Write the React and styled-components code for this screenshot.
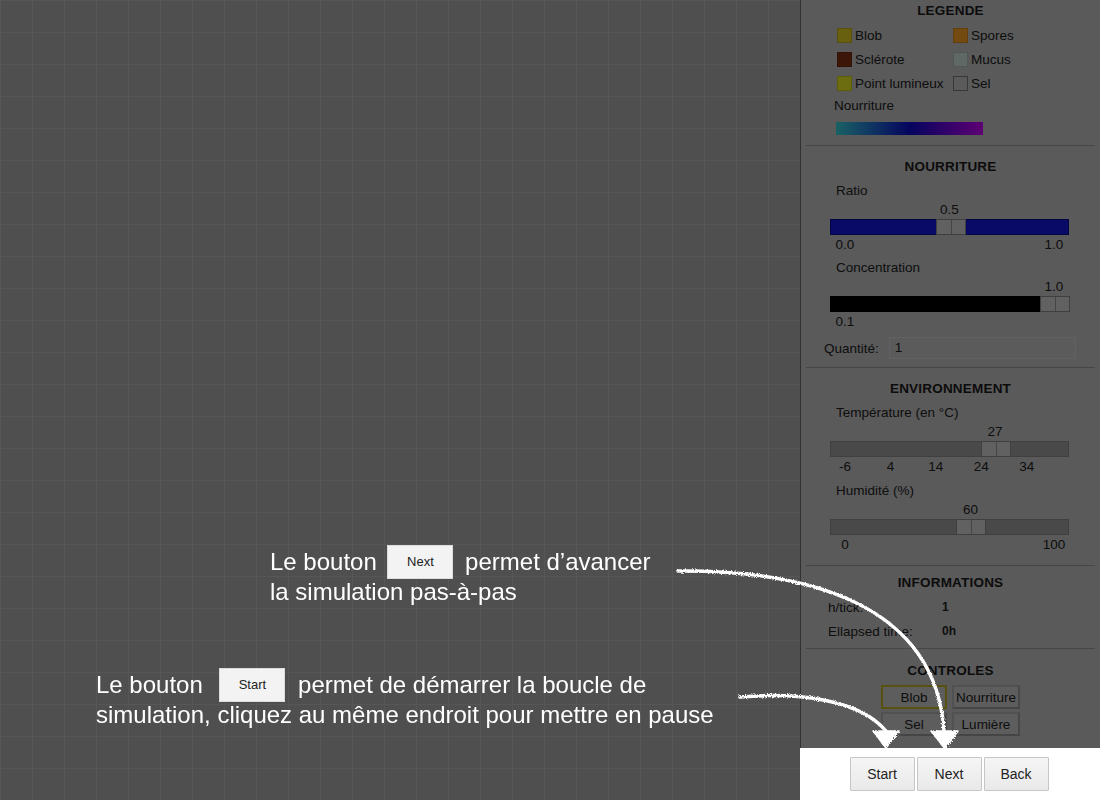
import React from "react"
import styled, { createGlobalStyle } from 'styled-components'

const GlobalStyle = createGlobalStyle`
  html, body {
    margin: 0;
    padding: 0;
    height: 100%;
    overflow: hidden;
  }
  body {
    font-family: "Liberation Sans", Arial, Helvetica, sans-serif;
    color: #222;
  }
  #root {
    height: 100%;
  }
`;

const Page = styled.div`
  display: flex;
  height: 100vh;
  width: 100vw;
`;

const Canvas = styled.div`
  flex: 1;
  background-color: #b0b0b0;
  background-image:
    linear-gradient(to right, #bebebe 1px, transparent 1px),
    linear-gradient(to bottom, #bebebe 1px, transparent 1px);
  background-size: 32px 32px;
`;

const Sidebar = styled.div`
  width: 300px;
  display: flex;
  flex-direction: column;
`;

const Panel = styled.div`
  flex: 1;
  background: #c7c7c7;
  border-left: 1px solid #6e6e6e;
  display: flex;
  flex-direction: column;
`;

const Section = styled.div`
  margin: 0 5px;
  padding: ${p => p.$pad};
  border-bottom: ${p => (p.$last ? 'none' : '1px solid #9c9c9c')};
  flex: ${p => (p.$last ? 1 : 'none')};
`;

const Title = styled.div`
  font-size: 13.5px;
  font-weight: bold;
  line-height: ${p => p.$lh || 20}px;
  text-align: center;
  letter-spacing: 0.2px;
  color: #1c1c1c;
`;

const LegendGrid = styled.div`
  display: grid;
  grid-template-columns: 116px 116px;
  grid-auto-rows: 24px;
  padding-left: 31px;
  margin-top: 4px;
`;

const LegendItem = styled.div`
  display: flex;
  align-items: center;
  gap: 3px;
  font-size: 13.5px;
`;

const Swatch = styled.span`
  width: 15px;
  height: 15px;
  box-sizing: border-box;
  background: ${p => p.$color};
  border: 1px solid ${p => (p.$outline ? '#7a7a7a' : 'rgba(0,0,0,0.15)')};
`;

const Label = styled.div`
  font-size: 13.5px;
  line-height: ${p => p.$lh || 20}px;
  padding-left: ${p => p.$indent || 30}px;
`;

const GradientBar = styled.div`
  margin: 5px 0 0 30px;
  width: 147px;
  height: 13px;
  background: linear-gradient(to right, #3ad8e0, #0c0cd0 50%, #d000ff);
`;

const SliderBlock = styled.div`
  margin-top: ${p => p.$top || 0}px;
`;

const ValueRow = styled.div`
  position: relative;
  margin-left: 24px;
  width: 239px;
  height: ${p => p.$h}px;
  font-size: 13.5px;
  line-height: ${p => p.$h}px;
`;

const Mark = styled.span`
  position: absolute;
  top: 0;
  transform: translateX(-50%);
  white-space: nowrap;
`;

const Track = styled.div`
  position: relative;
  margin-left: 24px;
  width: 239px;
  height: 16px;
  box-sizing: border-box;
  background: ${p => p.$color};
  border: 1px solid ${p => p.$edge || 'rgba(0,0,0,0.35)'};
`;

const Thumb = styled.div`
  position: absolute;
  top: -1px;
  width: 30px;
  height: 16px;
  box-sizing: border-box;
  background: #d8d8d8;
  border: 1px solid #8c8c8c;
  transform: translateX(-50%);
  &::after {
    content: "";
    position: absolute;
    left: 14px;
    top: 0;
    bottom: 0;
    width: 1px;
    background: #9a9a9a;
  }
`;

const QuantRow = styled.div`
  display: flex;
  align-items: center;
  gap: 10px;
  margin-top: 5px;
  padding-left: 18px;
  font-size: 13.5px;
`;

const QuantInput = styled.div`
  width: 187px;
  height: 22px;
  box-sizing: border-box;
  border: 1px solid #dadada;
  background: #cbcbcb;
  padding-left: 5px;
  line-height: 20px;
`;

const InfoRow = styled.div`
  display: flex;
  align-items: center;
  height: 24px;
  padding-left: 22px;
  font-size: 13.5px;
`;

const InfoKey = styled.span`
  width: 114px;
`;

const InfoValue = styled.span`
  font-size: 12px;
  font-weight: bold;
`;

const ControlGrid = styled.div`
  display: grid;
  grid-template-columns: 66px 68px;
  grid-auto-rows: 24px;
  gap: 3px 5px;
  justify-content: center;
  margin-top: 4px;
`;

const ControlButton = styled.button`
  font-family: inherit;
  font-size: 13.5px;
  color: #222;
  padding: 0;
  background: #cecece;
  border: ${p => (p.$active ? '2px solid #c3b526' : '2px solid #b4b4b4')};
  border-bottom-color: ${p => (p.$active ? '#c3b526' : '#9a9a9a')};
  border-right-color: ${p => (p.$active ? '#c3b526' : '#a0a0a0')};
`;

const BottomBar = styled.div`
  position: relative;
  z-index: 20;
  height: 52px;
  box-sizing: border-box;
  background: #fff;
  display: flex;
  justify-content: center;
  align-items: flex-start;
  padding-top: 9px;
  padding-right: 2px;
  gap: 2px;
`;

const BarButton = styled.button`
  width: 65px;
  height: 34px;
  font-family: inherit;
  font-size: 14px;
  color: #222;
  background: linear-gradient(to bottom, #f5f5f5, #e9e9e9);
  border: 1px solid #c6c6c6;
  border-radius: 1px;
  padding: 0;
`;

const Overlay = styled.div`
  position: fixed;
  inset: 0;
  z-index: 10;
  background: rgba(0, 0, 0, 0.55);
  pointer-events: none;
`;

const Arrows = styled.svg`
  position: absolute;
  left: 0;
  top: 0;
`;

const Hint = styled.div`
  position: absolute;
  left: ${p => p.$x}px;
  top: ${p => p.$y}px;
  color: #fff;
  font-size: 24px;
  line-height: 30px;
  white-space: nowrap;
`;

const HintButton = styled.span`
  display: inline-flex;
  align-items: center;
  justify-content: center;
  width: 66px;
  height: 34px;
  margin: -4px ${p => p.$right}px -4px ${p => p.$left}px;
  vertical-align: middle;
  box-sizing: border-box;
  background: #f3f3f3;
  border: 1px solid #dcdcdc;
  color: #222;
  font-size: 13px;
  position: relative;
  top: -2px;
`;

const legend = [
  { name: 'Blob', color: '#e6d222' },
  { name: 'Spores', color: '#ffa524' },
  { name: 'Sclérote', color: '#853214' },
  { name: 'Mucus', color: '#d2e6e1' },
  { name: 'Point lumineux', color: '#f0f024' },
  { name: 'Sel', color: 'transparent', outline: true },
];

// thumb centre runs from 15px to 224px inside a 239px track
const pos = (v, min, max) => 15 + ((v - min) / (max - min)) * 209;

const Slider = ({ label, value, min, max, ticks, color, edge, top }) => (
  <SliderBlock $top={top}>
    <Label>{label}</Label>
    <ValueRow $h={18}>
      <Mark style={{ left: pos(value, min, max) }}>{value}</Mark>
    </ValueRow>
    <Track $color={color} $edge={edge}>
      <Thumb style={{ left: pos(value, min, max) }} />
    </Track>
    <ValueRow $h={20}>
      {ticks.map(t => (
        <Mark key={t} style={{ left: pos(parseFloat(t), min, max) }}>{t}</Mark>
      ))}
    </ValueRow>
  </SliderBlock>
);

const App = () => {
  return (
    <Page>
      <GlobalStyle />
      <Canvas />
      <Sidebar>
        <Panel>
          <Section $pad="3px 0 10px">
            <Title $lh={16}>LEGENDE</Title>
            <LegendGrid>
              {legend.map(l => (
                <LegendItem key={l.name}>
                  <Swatch $color={l.color} $outline={l.outline} />
                  {l.name}
                </LegendItem>
              ))}
            </LegendGrid>
            <Label $indent={28} $lh={22}>Nourriture</Label>
            <GradientBar />
          </Section>

          <Section $pad="11px 0 8px">
            <Title>NOURRITURE</Title>
            <Slider label="Ratio" value="0.5" min={0} max={1} ticks={['0.0', '1.0']} color="#1414e6" top={4} />
            <Slider label="Concentration" value="1.0" min={0.1} max={1} ticks={['0.1']} color="#000" top={3} />
            <QuantRow>
              <span>Quantité:</span>
              <QuantInput>1</QuantInput>
            </QuantRow>
          </Section>

          <Section $pad="11px 0 10px">
            <Title>ENVIRONNEMENT</Title>
            <Slider label="Température (en °C)" value={27} min={-6} max={40} ticks={['-6', '4', '14', '24', '34']} color="#a2a2a2" edge="#8e8e8e" top={4} />
            <Slider label="Humidité (%)" value={60} min={0} max={100} ticks={['0', '100']} color="#a2a2a2" edge="#8e8e8e" top={4} />
          </Section>

          <Section $pad="7px 0 5px">
            <Title>INFORMATIONS</Title>
            <div style={{ height: 2 }} />
            <InfoRow><InfoKey>h/tick:</InfoKey><InfoValue>1</InfoValue></InfoRow>
            <InfoRow><InfoKey>Ellapsed time:</InfoKey><InfoValue>0h</InfoValue></InfoRow>
          </Section>

          <Section $pad="12px 0 0" $last>
            <Title>CONTROLES</Title>
            <ControlGrid>
              <ControlButton $active>Blob</ControlButton>
              <ControlButton>Nourriture</ControlButton>
              <ControlButton>Sel</ControlButton>
              <ControlButton>Lumière</ControlButton>
            </ControlGrid>
          </Section>
        </Panel>
        <BottomBar>
          <BarButton>Start</BarButton>
          <BarButton>Next</BarButton>
          <BarButton>Back</BarButton>
        </BottomBar>
      </Sidebar>

      <Overlay>
        <Arrows width="1100" height="800" viewBox="0 0 1100 800">
          <defs>
            <filter id="chalk" x="-5%" y="-5%" width="110%" height="110%">
              <feTurbulence type="fractalNoise" baseFrequency="1.1" numOctaves="2" result="noise" />
              <feDisplacementMap in="SourceGraphic" in2="noise" scale="4" />
            </filter>
          </defs>
          <g filter="url(#chalk)" fill="none" stroke="#fff" strokeWidth="3.5" strokeLinecap="round">
            <path d="M678 571 C800 570 935 600 944 731" />
            <path d="M740 697 C800 692 860 700 886 731" />
          </g>
          <g filter="url(#chalk)" fill="#fff" stroke="#fff" strokeWidth="1.5" strokeLinejoin="round">
            <polygon points="931,731 958,731 945,749" />
            <polygon points="873,731 899,731 886,748" />
          </g>
        </Arrows>

        <Hint $x={270} $y={547}>
          Le bouton <HintButton $left={4} $right={5}>Next</HintButton> permet d’avancer
          <br />
          la simulation pas-à-pas
        </Hint>

        <Hint $x={96} $y={670}>
          Le bouton <HintButton $left={10} $right={6}>Start</HintButton> permet de démarrer la boucle de
          <br />
          simulation, cliquez au même endroit pour mettre en pause
        </Hint>
      </Overlay>
    </Page>
  );
};

export default App;
